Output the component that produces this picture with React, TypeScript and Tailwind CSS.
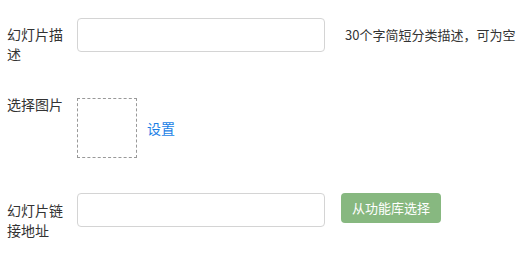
import React from 'react';

const font = { fontFamily: '"Noto Sans CJK SC", "Noto Sans", sans-serif' };

export default function App() {
  return (
    <div className="w-[528px] h-[258px] bg-white text-[#333] pt-[18px] pl-[7px] font-['Noto_Sans_CJK_SC',sans-serif]" style={font}>
      {/* 描述 */}
      <div className="flex items-start">
        <label className="w-[70px] pt-[6px] pr-[10px] text-[14px] leading-[20px]">幻灯片描述</label>
        <div className="flex items-center">
          <input className="w-[248px] h-[34px] border border-[#d4d4d4] rounded-[4px] px-2 text-[13px] outline-none" />
          <span className="ml-[20px] text-[13px] text-[#333]">30个字简短分类描述，可为空</span>
        </div>
      </div>

      {/* 图片 */}
      <div className="flex items-start mt-[30px]">
        <label className="w-[70px] text-[14px] leading-[20px]">选择图片</label>
        <div className="flex items-center mt-[4px]">
          <div className="w-[60px] h-[60px] border border-dashed border-[#999]" />
          <a className="ml-[10px] text-[14px] text-[#1a7fe6] cursor-pointer">设置</a>
        </div>
      </div>

      {/* 链接 */}
      <div className="flex items-start mt-[35px]">
        <label className="w-[70px] pt-[7px] pr-[10px] text-[14px] leading-[20px]">幻灯片链接地址</label>
        <input className="w-[248px] h-[34px] border border-[#d4d4d4] rounded-[4px] px-2 text-[13px] outline-none" />
        <button className="ml-[16px] h-[30px] px-[11px] rounded-[4px] bg-[#87b880] text-white text-[13px]">从功能库选择</button>
      </div>
    </div>
  );
}
